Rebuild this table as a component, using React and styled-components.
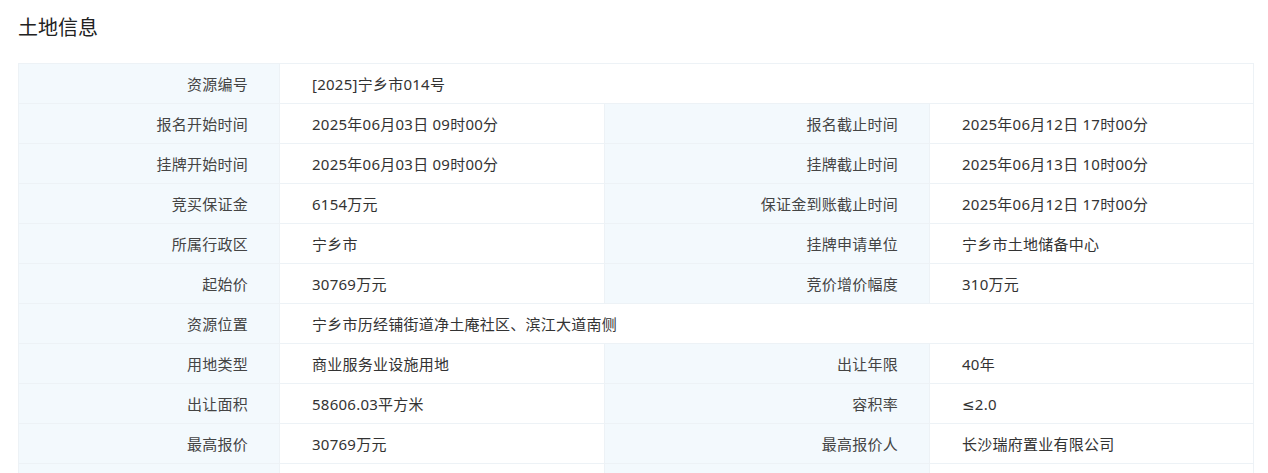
import React from "react";
import styled, { createGlobalStyle } from "styled-components";

const Global = createGlobalStyle`
  html, body { margin: 0; padding: 0; background: #fff; }
  body { font-family: "Noto Sans", "DejaVu Sans", "Noto Sans CJK SC", sans-serif; color: #333; }
`;

const Page = styled.div`
  padding: 13px 15px 0 18px;
`;

const Title = styled.h2`
  margin: 0 0 20px 0;
  font-size: 20px;
  font-weight: 400;
  line-height: 30px;
  color: #222;
`;

const Table = styled.table`
  width: 1235px;
  border-collapse: collapse;
  table-layout: fixed;
  font-size: 15px;
  letter-spacing: 0.25px;
`;

const Row = styled.tr`
  height: 40px;
`;

const Label = styled.td`
  background: #f3f9fd;
  border: 1px solid #edf2f6;
  text-align: right;
  padding: 0 31px 0 0;
  color: #444;
  white-space: nowrap;
`;

const Value = styled.td`
  background: #fff;
  border: 1px solid #edf2f6;
  padding: 0 0 0 32px;
  color: #333;
  white-space: nowrap;
`;

const rows = [
  [["资源编号", "[2025]宁乡市014号"]],
  [["报名开始时间", "2025年06月03日 09时00分"], ["报名截止时间", "2025年06月12日 17时00分"]],
  [["挂牌开始时间", "2025年06月03日 09时00分"], ["挂牌截止时间", "2025年06月13日 10时00分"]],
  [["竞买保证金", "6154万元"], ["保证金到账截止时间", "2025年06月12日 17时00分"]],
  [["所属行政区", "宁乡市"], ["挂牌申请单位", "宁乡市土地储备中心"]],
  [["起始价", "30769万元"], ["竞价增价幅度", "310万元"]],
  [["资源位置", "宁乡市历经铺街道净土庵社区、滨江大道南侧"]],
  [["用地类型", "商业服务业设施用地"], ["出让年限", "40年"]],
  [["出让面积", "58606.03平方米"], ["容积率", "≤2.0"]],
  [["最高报价", "30769万元"], ["最高报价人", "长沙瑞府置业有限公司"]],
  [["", ""], ["", ""]],
];

export default function App() {
  return (
    <Page>
      <Global />
      <Title>土地信息</Title>
      <Table>
        <colgroup>
          <col style={{ width: 261 }} />
          <col style={{ width: 325 }} />
          <col style={{ width: 325 }} />
          <col style={{ width: 324 }} />
        </colgroup>
        <tbody>
          {rows.map((r, i) => (
            <Row key={i}>
              {r.length === 1 ? (
                <>
                  <Label>{r[0][0]}</Label>
                  <Value colSpan={3}>{r[0][1]}</Value>
                </>
              ) : (
                r.map(([l, v], j) => (
                  <React.Fragment key={j}>
                    <Label>{l}</Label>
                    <Value>{v}</Value>
                  </React.Fragment>
                ))
              )}
            </Row>
          ))}
        </tbody>
      </Table>
    </Page>
  );
}
